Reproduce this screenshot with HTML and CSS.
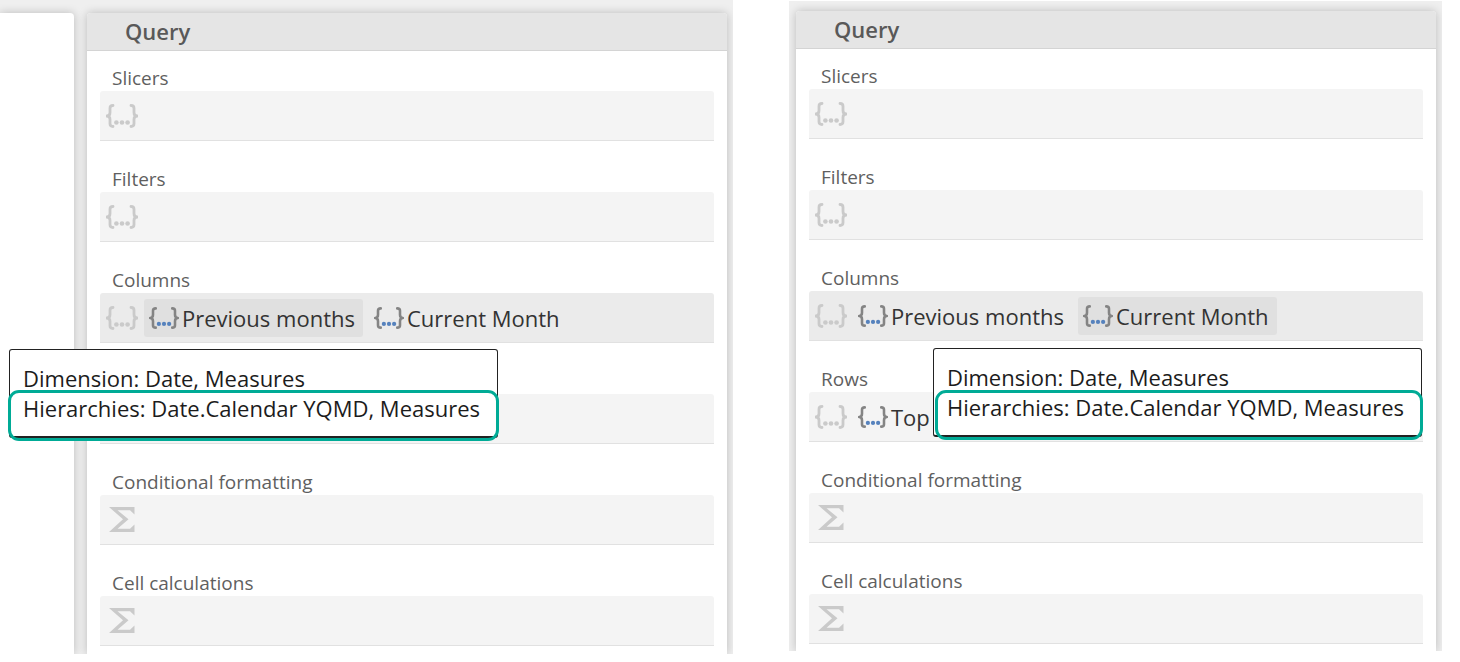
FILE: index.html
```html
<!DOCTYPE html>
<html lang="en">
<head>
<meta charset="utf-8">
<title>Query</title>
<link rel="stylesheet" href="styles.css">
</head>
<body>
<svg class="sprite" aria-hidden="true">
  <symbol id="set" viewBox="0 0 32 24">
    <path class="brace" d="M7 1.5C4.600 1.500 4 2.400 4 4.200V8.500C4 10.600 3 12 .8 12C3 12 4 13.400 4 15.500V19.800C4 21.600 4.600 22.500 7 22.500M25 1.500C27.400 1.500 28 2.400 28 4.200V8.500C28 10.600 29 12 31.200 12C29 12 28 13.400 28 15.500V19.800C28 21.600 27.400 22.500 25 22.500"/>
    <g class="dots"><circle cx="10.400" cy="18.500" r="2.300"/><circle cx="16" cy="18.500" r="2.300"/><circle cx="21.600" cy="18.500" r="2.300"/></g>
  </symbol>
  <symbol id="sum" viewBox="0 0 26 25">
    <path fill="currentColor" d="M0 0H25.500V7.500L21 3.200H8.500L19.500 12.300L8.500 21.800H21L25.500 17.500V25H0L14 12.300Z"/>
  </symbol>
</svg>
<main class="page">
  <div class="window window-left">
    <div class="side"></div>
    <section class="panel">
      <h2 class="title">Query</h2>
      <div class="fields">
        <div class="field"><h3 class="label">Slicers</h3><div class="slot"><svg class="ghost"><use href="#set"/></svg></div></div>
        <div class="field"><h3 class="label">Filters</h3><div class="slot"><svg class="ghost"><use href="#set"/></svg></div></div>
        <div class="field"><h3 class="label">Columns</h3><div class="slot slot-active"><svg class="ghost"><use href="#set"/></svg>
          <button class="item item-hover" type="button"><svg class="icon"><use href="#set"/></svg>Previous months</button>
          <button class="item" type="button"><svg class="icon"><use href="#set"/></svg>Current Month</button></div></div>
        <div class="field"><div class="label"></div><div class="slot"></div></div>
        <div class="field"><h3 class="label">Conditional formatting</h3><div class="slot"><svg class="sum"><use href="#sum"/></svg></div></div>
        <div class="field"><h3 class="label">Cell calculations</h3><div class="slot"><svg class="sum"><use href="#sum"/></svg></div></div>
      </div>
    </section>
    <div class="tooltip tooltip-left" role="tooltip">
      <div>Dimension: Date, Measures</div>
      <div>Hierarchies: Date.Calendar YQMD, Measures</div>
      <div class="mark"></div>
    </div>
  </div>
  <div class="window window-right">
    <section class="panel">
      <h2 class="title">Query</h2>
      <div class="fields">
        <div class="field"><h3 class="label">Slicers</h3><div class="slot"><svg class="ghost"><use href="#set"/></svg></div></div>
        <div class="field"><h3 class="label">Filters</h3><div class="slot"><svg class="ghost"><use href="#set"/></svg></div></div>
        <div class="field"><h3 class="label">Columns</h3><div class="slot slot-active"><svg class="ghost"><use href="#set"/></svg>
          <button class="item" type="button"><svg class="icon"><use href="#set"/></svg>Previous months</button>
          <button class="item item-hover" type="button"><svg class="icon"><use href="#set"/></svg>Current Month</button></div></div>
        <div class="field"><h3 class="label">Rows</h3><div class="slot"><svg class="ghost"><use href="#set"/></svg>
          <button class="item" type="button"><svg class="icon"><use href="#set"/></svg>Top</button></div></div>
        <div class="field"><h3 class="label">Conditional formatting</h3><div class="slot"><svg class="sum"><use href="#sum"/></svg></div></div>
        <div class="field"><h3 class="label">Cell calculations</h3><div class="slot"><svg class="sum"><use href="#sum"/></svg></div></div>
      </div>
    </section>
    <div class="tooltip tooltip-right" role="tooltip">
      <div>Dimension: Date, Measures</div>
      <div>Hierarchies: Date.Calendar YQMD, Measures</div>
      <div class="mark"></div>
    </div>
  </div>
</main>
</body>
</html>
```
FILE: styles.css
```css
* { box-sizing: border-box; }
body {
  margin: 0;
  background: #fff;
  color: #333;
  font-family: "Open Sans", "Noto Sans", sans-serif;
}
h2, h3 { margin: 0; }
.sprite { position: absolute; width: 0; height: 0; }
.page {
  display: flex;
  align-items: flex-start;
  gap: 56px;
  padding-right: 18px;
}
.window {
  position: relative;
  display: flex;
  background: #efefef;
  clip-path: inset(0);
}
.window-left { flex: 727 1 0; gap: 13px; padding: 13px 6px 0 0; }
.window-right { flex: 640 1 0; margin-top: 1px; padding: 10px 6px 0 7px; }
.side {
  flex: 0 0 74px;
  background: #fff;
  border-radius: 0 4px 0 0;
  box-shadow: 0 0 10px rgba(0, 0, 0, .22);
}
.panel {
  flex: 1;
  min-width: 0;
  background: #fff;
  border-radius: 4px 4px 0 0;
  box-shadow: 0 0 10px rgba(0, 0, 0, .22);
}
.title {
  height: 38px;
  padding-left: 38px;
  background: #e5e5e5;
  border-bottom: 1px solid #d4d4d4;
  border-radius: 4px 4px 0 0;
  color: #595959;
  font-size: 22px;
  font-weight: 600;
  line-height: 36px;
}
.fields {
  display: flex;
  flex-direction: column;
  gap: 25px;
  padding: 14px 13px 8px;
}
.window-right .fields { padding-bottom: 7px; }
.label {
  min-height: 26px;
  padding-left: 12px;
  color: #5f5f5f;
  font-size: 19px;
  font-weight: 400;
  line-height: 26px;
}
.slot {
  display: flex;
  align-items: center;
  gap: 6px;
  height: 50px;
  padding-left: 6px;
  background: #f4f4f4;
  border-bottom: 1px solid #e1e1e1;
  border-radius: 3px 3px 0 0;
}
.slot-active { background: #ebebeb; }
.brace { fill: none; stroke: currentColor; stroke-width: 2.800; stroke-linecap: round; stroke-linejoin: round; }
.dots { fill: var(--dots, currentColor); }
.ghost { flex: none; width: 32px; height: 24px; color: #cacaca; }
.sum { flex: none; width: 26px; height: 25px; margin-left: 3px; color: #cacaca; }
.icon { flex: none; width: 30px; height: 22px; color: #848484; --dots: #5682bd; }
.item {
  display: flex;
  align-items: center;
  gap: 3px;
  height: 38px;
  padding: 0 8px 0 5px;
  border: 0;
  border-radius: 3px;
  background: none;
  color: #333;
  font: inherit;
  font-size: 22px;
  line-height: 36px;
  white-space: nowrap;
}
.item-hover { background: #e0e0e0; }
.tooltip {
  position: absolute;
  padding: 13px 17px 13px 13px;
  background: #fff;
  border: 1px solid #222;
  border-bottom-width: 2px;
  border-radius: 3px;
  color: #1c1c1c;
  font-size: 22px;
  line-height: 30px;
  white-space: nowrap;
}
.tooltip-left { top: 349px; left: 9px; }
.tooltip-right { top: 347px; right: 20px; }
.mark {
  position: absolute;
  top: 40px;
  right: -2px;
  bottom: -5px;
  left: -2px;
  border: 3px solid #00ab96;
  border-radius: 11px;
}
.tooltip-right .mark { top: 41px; left: 1px; }
```
